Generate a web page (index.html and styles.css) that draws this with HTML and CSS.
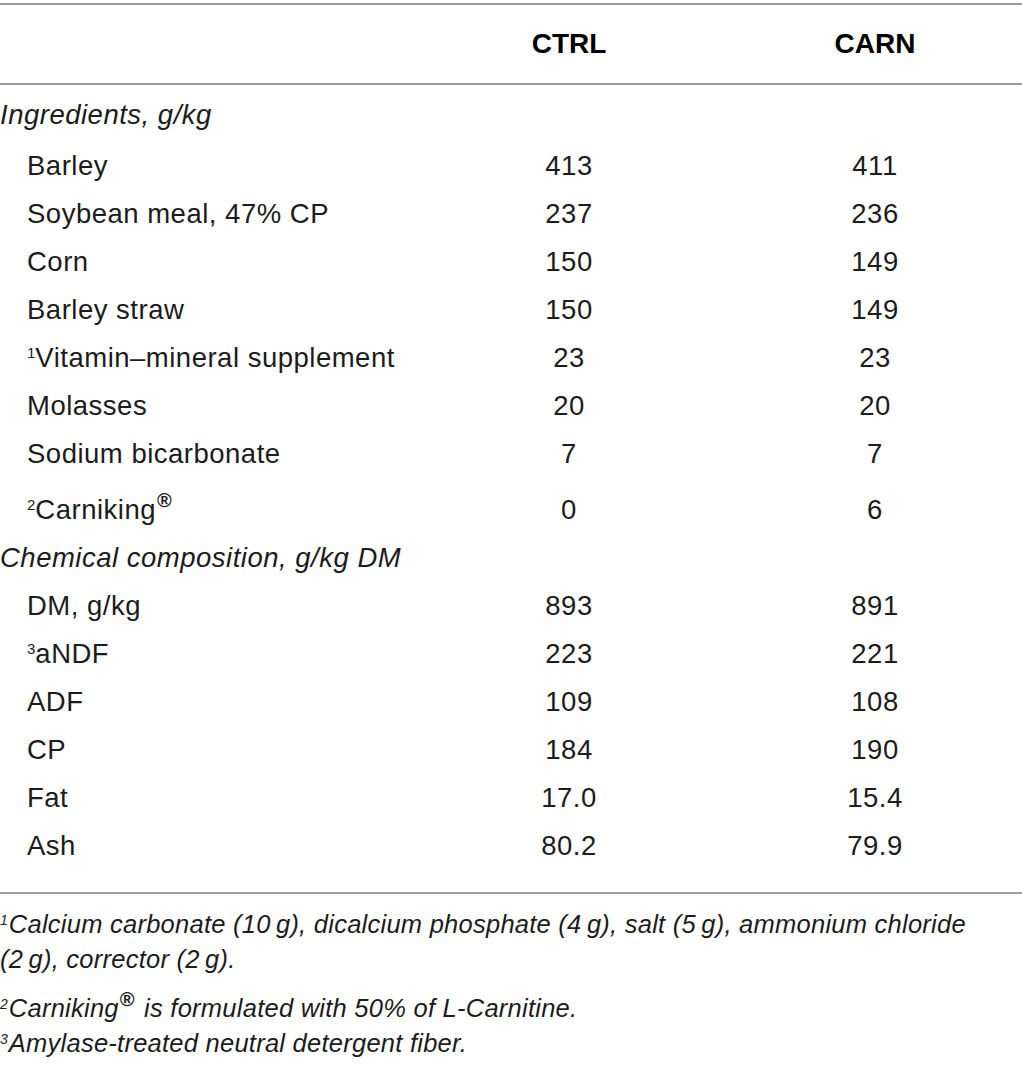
FILE: index.html
```html
<!DOCTYPE html>
<html lang="en">
<head>
<meta charset="utf-8">
<title>Diet composition</title>
<link rel="stylesheet" href="styles.css">
</head>
<body>
<div class="page">
  <div class="table">
    <div class="row head">
      <div class="label"></div>
      <div class="num">CTRL</div>
      <div class="num">CARN</div>
    </div>
    <div class="body">
      <div class="row section first"><div class="label">Ingredients, g/kg</div><div class="num"></div><div class="num"></div></div>
      <div class="row item"><div class="label">Barley</div><div class="num">413</div><div class="num">411</div></div>
      <div class="row item"><div class="label">Soybean meal, 47% CP</div><div class="num">237</div><div class="num">236</div></div>
      <div class="row item"><div class="label">Corn</div><div class="num">150</div><div class="num">149</div></div>
      <div class="row item"><div class="label">Barley straw</div><div class="num">150</div><div class="num">149</div></div>
      <div class="row item"><div class="label"><sup class="fn">1</sup>Vitamin–mineral supplement</div><div class="num">23</div><div class="num">23</div></div>
      <div class="row item"><div class="label">Molasses</div><div class="num">20</div><div class="num">20</div></div>
      <div class="row item"><div class="label">Sodium bicarbonate</div><div class="num">7</div><div class="num">7</div></div>
      <div class="row item tall"><div class="label"><sup class="fn">2</sup>Carniking<sup class="reg">®</sup></div><div class="num">0</div><div class="num">6</div></div>
      <div class="row section"><div class="label">Chemical composition, g/kg DM</div><div class="num"></div><div class="num"></div></div>
      <div class="row item"><div class="label">DM, g/kg</div><div class="num">893</div><div class="num">891</div></div>
      <div class="row item"><div class="label"><sup class="fn">3</sup>aNDF</div><div class="num">223</div><div class="num">221</div></div>
      <div class="row item"><div class="label">ADF</div><div class="num">109</div><div class="num">108</div></div>
      <div class="row item"><div class="label">CP</div><div class="num">184</div><div class="num">190</div></div>
      <div class="row item"><div class="label">Fat</div><div class="num">17.0</div><div class="num">15.4</div></div>
      <div class="row item last"><div class="label">Ash</div><div class="num">80.2</div><div class="num">79.9</div></div>
    </div>
  </div>
  <div class="notes">
    <p class="note"><sup class="nfn">1</sup>Calcium carbonate (10&#8201;g), dicalcium phosphate (4&#8201;g), salt (5&#8201;g), ammonium chloride (2&#8201;g), corrector (2&#8201;g).</p>
    <p class="note second"><sup class="nfn">2</sup>Carniking<sup class="nreg">®</sup> is formulated with 50% of L-Carnitine.</p>
    <p class="note third"><sup class="nfn">3</sup>Amylase-treated neutral detergent fiber.</p>
  </div>
</div>
</body>
</html>
```

FILE: styles.css
```css
html, body {
  margin: 0;
  padding: 0;
  background: #ffffff;
}

body {
  font-family: "Liberation Sans", Arial, Helvetica, sans-serif;
  color: #1c1c1c;
}

.page {
  width: 1022px;
  padding-top: 3px;
}

.row {
  display: grid;
  grid-template-columns: 410px 318px 294px;
  align-items: center;
  box-sizing: border-box;
  height: 48px;
  font-size: 27.5px;
  letter-spacing: 0.5px;
}

.head {
  height: 82px;
  border-top: 2px solid #9c9c9c;
  border-bottom: 2px solid #9c9c9c;
  font-size: 28px;
  font-weight: bold;
  letter-spacing: 0;
  color: #000;
}

.body {
  border-bottom: 2px solid #9c9c9c;
}

.num {
  text-align: center;
}

.label {
  white-space: nowrap;
}

.item .label {
  padding-left: 27px;
}

.section .label {
  font-style: italic;
}

.first {
  height: 57px;
  padding-top: 3px;
}

.tall {
  height: 56px;
  padding-top: 8px;
}

.last {
  height: 70px;
  padding-bottom: 22px;
}

sup {
  line-height: 0;
}

.fn {
  font-size: 15px;
  vertical-align: 9px;
  letter-spacing: 0;
}

.reg {
  font-size: 20px;
  font-weight: bold;
  vertical-align: 12px;
  margin-left: 1px;
}

.notes {
  padding-top: 13px;
  max-width: 990px;
}

.note {
  margin: 0;
  font-size: 25.5px;
  font-style: italic;
  line-height: 35px;
  letter-spacing: 0.25px;
}

.note.second {
  margin-top: 14px;
}

.nfn {
  font-size: 14px;
  vertical-align: 8px;
  letter-spacing: 0;
  margin-right: 1px;
}

.nreg {
  font-size: 20px;
  font-style: normal;
  font-weight: bold;
  vertical-align: 11px;
  margin-left: 1px;
  margin-right: 2px;
}
```
